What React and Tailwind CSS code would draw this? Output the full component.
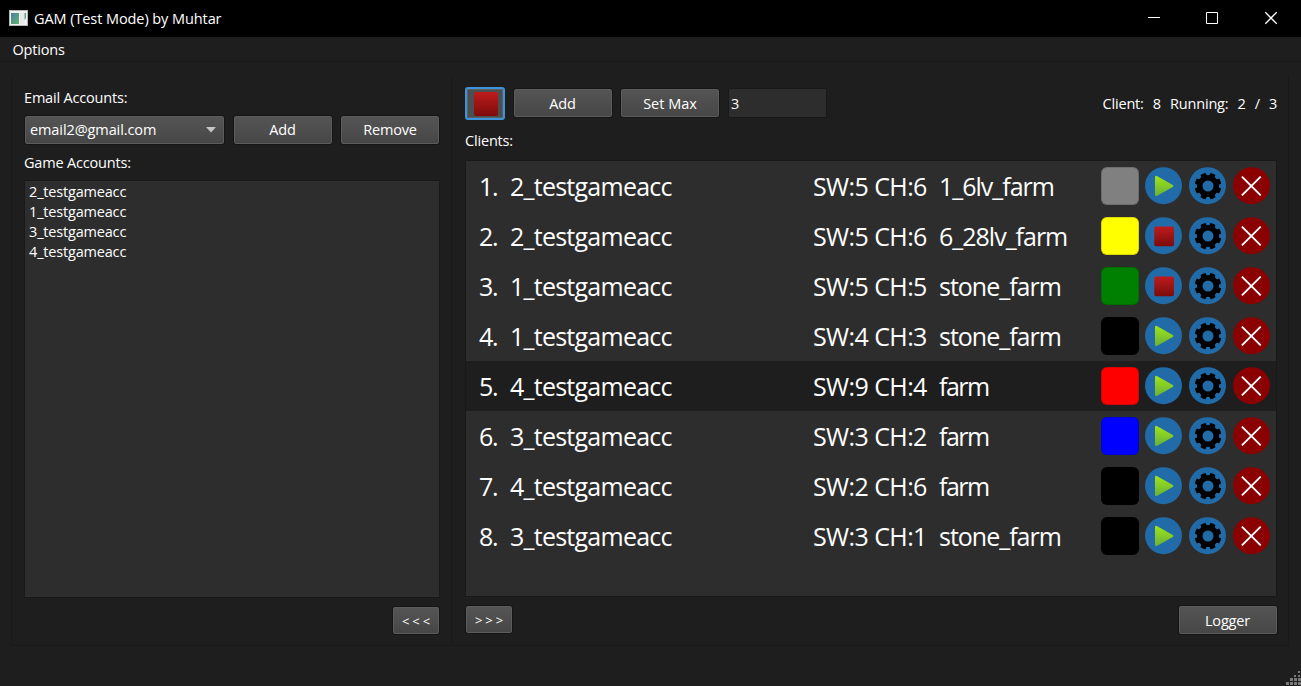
import React from "react";

const clients = [
  [1, "2_testgameacc", "SW:5 CH:6", "1_6lv_farm", "bg-[#808080]", false],
  [2, "2_testgameacc", "SW:5 CH:6", "6_28lv_farm", "bg-[#ffff00]", true],
  [3, "1_testgameacc", "SW:5 CH:5", "stone_farm", "bg-[#008000]", true],
  [4, "1_testgameacc", "SW:4 CH:3", "stone_farm", "bg-black", false],
  [5, "4_testgameacc", "SW:9 CH:4", "farm", "bg-[#ff0000]", false],
  [6, "3_testgameacc", "SW:3 CH:2", "farm", "bg-[#0000ff]", false],
  [7, "4_testgameacc", "SW:2 CH:6", "farm", "bg-black", false],
  [8, "3_testgameacc", "SW:3 CH:1", "stone_farm", "bg-black", false],
];

const notches = [0, 45, 90, 135, 180, 225, 270, 315];

function Button({ children, className = "h-[30px] justify-center" }) {
  return (
    <button
      className={`flex shrink-0 items-center rounded-[3px] border border-[#151515] bg-linear-to-b from-[#555555] to-[#464646] shadow-[inset_0_0_0_1px_#5c5c5c] ${className}`}
    >
      {children}
    </button>
  );
}

function PlayIcon() {
  return (
    <svg width="37" height="38" viewBox="0 0 37 38" className="block">
      <circle cx="18.5" cy="18.7" r="18.5" fill="#206ba8" />
      <path d="M10 10.2Q10 8.4 11.8 9L27.8 18Q29.2 18.9 27.8 19.900L11.8 28.9Q10 29.500 10 27.7Z" fill="url(#play)" />
    </svg>
  );
}

function StopIcon() {
  return (
    <svg width="37" height="38" viewBox="0 0 37 38" className="block">
      <circle cx="18.5" cy="18.7" r="18.5" fill="#206ba8" />
      <rect x="9.3" y="9.5" width="19.700" height="19.700" rx="2" fill="url(#stop)" />
    </svg>
  );
}

function GearIcon() {
  return (
    <svg width="37" height="38" viewBox="0 0 37 38" className="block">
      <circle cx="18.5" cy="18.7" r="18.5" fill="#206ba8" />
      <circle cx="19" cy="19" r="13.3" fill="#000" />
      {notches.map((a) => (
        <path key={a} d="M16.300 4.500L16.900 7Q17.200 8.200 19 8.200Q20.800 8.200 21.100 7L21.700 4.500Z" fill="#206ba8" transform={`rotate(${a} 19 19)`} />
      ))}
      <circle cx="19" cy="19" r="5.5" fill="#206ba8" />
    </svg>
  );
}

function CloseIcon() {
  return (
    <svg width="37" height="38" viewBox="0 0 37 38" className="block">
      <circle cx="18.5" cy="18.7" r="18.5" fill="#8b0000" />
      <path d="M8.900 9.600L27.700 28.400M27.700 9.600L8.900 28.400" stroke="#fff" strokeWidth="1.900" />
    </svg>
  );
}

function ClientRow({ client }) {
  const [id, name, place, job, color, running] = client;
  return (
    <div className={`flex h-[50px] items-start pr-[6px] pl-[13px] text-[25px] leading-[51px] ${id === 5 ? "bg-[#1e1e1e]" : ""}`}>
      <span className="w-[31px] shrink-0"><span className="tracking-[-1.2px]">{id}.</span></span>
      <span className="w-[303px] shrink-0"><span className="tracking-[-0.75px]">{name}</span></span>
      <span className="w-[126px] shrink-0"><span className="tracking-[-0.6px]">{place}</span></span>
      <span className="flex-1"><span className={job.length > 4 ? "tracking-[-1px]" : "tracking-[-1.5px]"}>{job}</span></span>
      <div className="flex gap-[7px] pt-[6px]">
        <div className={`h-[38px] w-[38px] shrink-0 rounded-[6px] border border-black/15 ${color}`} />
        <div className="-ml-px">{running ? <StopIcon /> : <PlayIcon />}</div>
        <GearIcon />
        <CloseIcon />
      </div>
    </div>
  );
}

export default function App() {
  return (
    <div className="flex h-[686px] w-[1301px] flex-col overflow-hidden bg-[#1e1e1e] font-['Open_Sans','Noto_Sans',sans-serif] text-[14.5px] leading-5 tracking-[-0.18px] whitespace-pre text-white">
      <svg width="0" height="0" className="absolute">
        <defs>
          <linearGradient id="play" x1="0" y1="0" x2="0" y2="1">
            <stop stopColor="#a0e516" /><stop offset="1" stopColor="#67b03a" />
          </linearGradient>
          <linearGradient id="stop" x1="0" y1="0" x2="0" y2="1">
            <stop stopColor="#bd1c1c" /><stop offset="1" stopColor="#7d0b0b" />
          </linearGradient>
        </defs>
      </svg>
      <header className="flex h-[37px] shrink-0 items-center bg-black pl-[9px]">
        <svg width="19" height="16" viewBox="0 0 19 16" className="-mt-[2px]">
          <defs>
            <linearGradient id="app" x1="0" y1="0" x2="1" y2="1">
              <stop stopColor="#4a7fa0" /><stop offset="1" stopColor="#63b56f" />
            </linearGradient>
          </defs>
          <rect x="0.5" y="0.5" width="18" height="15" fill="#f1f1f1" stroke="#b5b5b5" />
          <rect x="2" y="3" width="8" height="11" fill="url(#app)" />
          <path d="M11 3h4v11h-4z" fill="#e8e8e8" /><path d="M15.500 3h1.500v5l-1.500 2z" fill="#5da58a" />
        </svg>
        <span className="ml-[6px] flex-1"><span className="tracking-[-0.08px]">GAM (Test Mode) by Muhtar</span></span>
        <svg width="153" height="37" viewBox="0 0 153 37" fill="none" stroke="#fff">
          <path d="M0 17.500h12M58.500 12.500h11v11h-11z" />
          <path d="M117.300 12.300l11.400 11.400M128.700 12.300l-11.400 11.400" strokeWidth="1.300" />
        </svg>
      </header>
      <nav className="h-[25px] shrink-0 border-b border-[#191919] pt-[3px] pl-[12.5px]">
        <span>Options</span>
      </nav>
      <main className="mt-[13px] flex h-[571px] shrink-0 pl-[11px]">
        <section className="flex w-[441px] flex-col border-x border-b border-[#191919] pr-[11px] pl-[12px]">
          <div className="pt-[13px]"><span>Email Accounts:</span></div>
          <div className="mt-[7px] flex gap-[7px]">
            <Button className="mr-px h-[30px] w-[201px] justify-between pr-[8px] pl-[5px]">
              <span className="tracking-[-0.1px]">email2@gmail.com</span>
              <svg width="10" height="6" viewBox="0 0 10 6"><path d="M0 0h10L5 5.500z" fill="#c4c4c4" /></svg>
            </Button>
            <Button className="h-[30px] w-[100px] justify-center"><span className="-ml-px">Add</span></Button>
            <Button className="h-[30px] w-[100px] justify-center"><span>Remove</span></Button>
          </div>
          <div className="pt-[8px]"><span>Game Accounts:</span></div>
          <div className="mt-[7px] h-[418px] shrink-0 border border-[#191919] bg-[#2d2d2d] pt-px pl-[4px]">
            {["2", "1", "3", "4"].map((n) => (
              <div key={n} className="h-5"><span>{n}_testgameacc</span></div>
            ))}
          </div>
          <div className="mt-[8px] flex justify-end">
            <Button className="h-[29px] w-[48px] justify-center"><span className="pt-px pl-[3px] text-[13px] tracking-[2.9px]">{"<<<"}</span></Button>
          </div>
        </section>
        <section className="flex w-[837px] flex-col border-r border-b border-[#191919] pr-[11px] pl-[13px]">
          <div className="flex items-start pt-[12px]">
            <button className="flex h-[33px] w-[40px] shrink-0 items-center justify-center rounded-[3px] border-2 border-[#3d94dc] bg-[#4b4f52] shadow-[inset_0_0_0_1px_#5c5f62]">
              <svg width="24" height="24" className="ml-px"><rect width="24" height="24" rx="2" fill="url(#stop)" /></svg>
            </button>
            <Button className="mt-px ml-[8px] h-[30px] w-[100px] justify-center"><span className="-ml-px pt-px">Add</span></Button>
            <Button className="mt-px ml-[7px] h-[30px] w-[100px] justify-center"><span className="pt-px tracking-[0px]">Set Max</span></Button>
            <div className="mt-px ml-[8px] flex h-[30px] w-[99px] items-center rounded-[2px] border border-[#191919] bg-[#2d2d2d] pt-px pl-[2px]">3</div>
            <div className="flex flex-1 justify-end pt-[7px] [word-spacing:0.95px]"><span>{"Client:  8  Running:  2  /  3"}</span></div>
          </div>
          <div className="pt-[11px]"><span>Clients:</span></div>
          <div className="mt-[9px] h-[437px] shrink-0 border border-[#191919] bg-[#2d2d2d]">
            {clients.map((c) => <ClientRow key={c[0]} client={c} />)}
          </div>
          <div className="mt-[8px] -mr-px flex items-start justify-between">
            <Button className="h-[29px] w-[48px] justify-center"><span className="pt-px pl-[3px] text-[13px] tracking-[2.9px]">{">>>"}</span></Button>
            <Button className="h-[30px] w-[100px] justify-center"><span className="-ml-px pt-px">Logger</span></Button>
          </div>
        </section>
      </main>
      <footer className="flex flex-1 items-end justify-end">
        <svg width="15" height="15" fill="#797979">
          <path d="M12 0h2v2h-2zM8 4h2v2H8zM12 4h2v2h-2zM4 7h3v3H4zM8 7h3v3H8zM12 7h3v3h-3zM0 11h3v3H0zM4 11h3v3H4zM8 11h3v3H8zM12 11h3v3h-3z" />
        </svg>
      </footer>
    </div>
  );
}
